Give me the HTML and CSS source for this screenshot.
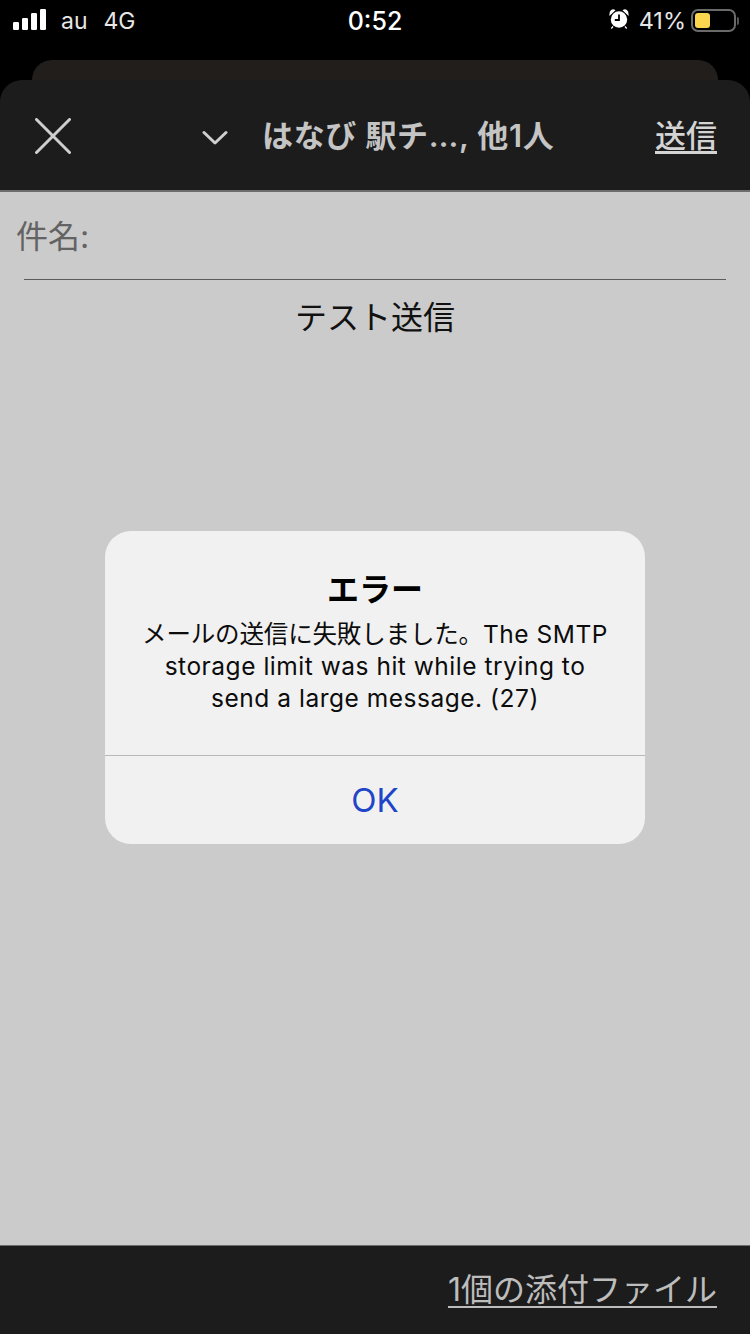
FILE: index.html
```html
<!DOCTYPE html>
<html lang="ja">
<head>
<meta charset="utf-8">
<title>エラー</title>
<link rel="stylesheet" href="styles.css">
</head>
<body>
<div class="screen">
  <div class="status">
    <div class="status-left">
      <svg class="signal" width="34" height="22" viewBox="0 0 34 22"><rect x="0" y="13" width="6" height="8" rx="1.2"/><rect x="9" y="9" width="6" height="12" rx="1.2"/><rect x="18" y="4" width="6" height="17" rx="1.2"/><rect x="27" y="0" width="6" height="21" rx="1.2"/></svg>
      <span class="carrier">au</span>
      <span class="net">4G</span>
    </div>
    <div class="time">0:52</div>
    <div class="status-right">
      <svg class="alarm" width="20" height="22" viewBox="0 0 20 22"><circle cx="10" cy="11.500" r="8.200" fill="#fff"/><path d="M10 6.500V12H5.800" fill="none" stroke="#000" stroke-width="1.800"/><path d="M1 6.500 5.500 2.300C3.500 1 1 2.800 1 6.500ZM19 6.500 14.500 2.300C16.500 1 19 2.800 19 6.500ZM4 18.500 2.300 20.500M16 18.500 17.700 20.500" fill="#fff" stroke="#fff" stroke-width="1.200"/></svg>
      <span class="pct">41%</span>
      <div class="battery"><div class="battery-fill"></div></div>
      <div class="battery-cap"></div>
    </div>
  </div>
  <div class="card-behind"></div>
  <header class="nav">
    <svg class="close" width="36" height="36" viewBox="0 0 36 36"><path d="M1.500 1.500 34.500 34.500M34.500 1.500 1.500 34.500" fill="none" stroke="#cfcfcf" stroke-width="3" stroke-linecap="round"/></svg>
    <div class="nav-title">
      <svg class="chev" width="26" height="16" viewBox="0 0 26 16"><path d="M2 2.500 13 13 24 2.500" fill="none" stroke="#cfcfcf" stroke-width="3" stroke-linecap="round" stroke-linejoin="round"/></svg>
      <span class="recipients">はなび 駅チ…, 他1人</span>
    </div>
    <span class="send">送信</span>
  </header>
  <main class="content">
    <div class="subject-label">件名:</div>
    <div class="rule"></div>
    <div class="subject">テスト送信</div>
  </main>
  <footer class="bottom">
    <span class="attach">1個の添付ファイル</span>
  </footer>
  <div class="dialog">
    <div class="dialog-body">
      <div class="dialog-title">エラー</div>
      <p class="dialog-text"><span class="jp">メールの送信に失敗しました。</span>The SMTP<br>storage limit was hit while trying to<br>send a large message. (27)</p>
    </div>
    <div class="dialog-btn">OK</div>
  </div>
</div>
</body>
</html>
```
FILE: styles.css
```css
* { box-sizing: border-box; }
html, body { margin: 0; padding: 0; }
body {
  width: 750px;
  height: 1334px;
  overflow: hidden;
  background: #000;
  font-family: "Inter", "Noto Sans CJK JP", sans-serif;
}
.screen {
  position: relative;
  width: 750px;
  height: 1334px;
  display: flex;
  flex-direction: column;
}
.status {
  height: 60px;
  flex: none;
  position: relative;
  display: flex;
  justify-content: space-between;
  color: #fff;
  padding: 0 11px 0 13px;
}
.status-left { display: flex; align-items: flex-start; padding-top: 9px; }
.signal { fill: #fff; margin-right: 14px; }
.carrier, .net { font-size: 23px; line-height: 24px; color: #e6e6e6; }
.net { margin-left: 16px; }
.time {
  position: absolute;
  left: 0;
  right: 0;
  top: 8px;
  text-align: center;
  font-size: 25px;
  line-height: 26px;
  font-weight: 500;
}
.status-right { display: flex; align-items: flex-start; padding-top: 8px; }
.alarm { margin-right: 10px; }
.pct { font-size: 23.500px; line-height: 25px; color: #e6e6e6; margin-right: 5px; }
.battery {
  width: 45px;
  height: 23px;
  border: 2px solid #6a6a6a;
  border-radius: 7px;
  padding: 2px;
  margin-top: 1px;
}
.battery-fill { width: 15px; height: 15px; background: #fcd64f; border-radius: 3px; }
.battery-cap { width: 2px; height: 8px; background: #555; margin: 9px 0 0 1px; border-radius: 0 2px 2px 0; }
.card-behind {
  flex: none;
  height: 20px;
  margin: 0 32px;
  background: #211e1c;
  border-radius: 20px 20px 0 0;
}
.nav {
  flex: none;
  height: 112px;
  background: #1c1c1c;
  border-radius: 22px 22px 0 0;
  border-bottom: 2px solid #6c6c6c;
  position: relative;
  display: flex;
  align-items: center;
  padding: 0 33px 0 35px;
  justify-content: space-between;
}
.close { margin-top: 2px; }
.nav-title {
  position: absolute;
  left: 202px;
  top: 33px;
  display: flex;
  align-items: center;
  color: #c4c4c4;
}
.chev { margin-right: 34px; margin-top: 3px; }
.recipients { font-size: 31px; line-height: 46px; font-weight: 600; white-space: nowrap; letter-spacing: 0.650px; }
.send { font-size: 31px; line-height: 46px; color: #d4d4d4; font-weight: 500; text-decoration: underline; text-underline-offset: 4px; margin-top: 2px; }
.content {
  flex: 1;
  background: #cbcbcb;
  padding: 22px 24px 0;
  display: flex;
  flex-direction: column;
}
.subject-label { font-size: 32px; line-height: 46px; color: #636363; margin-left: -8px; height: 65px; }
.rule { height: 1px; background: #5c5c5c; }
.subject { font-size: 32px; line-height: 48px; color: #111; text-align: center; margin-top: 14px; }
.bottom {
  flex: none;
  height: 89px;
  background: #1c1c1c;
  border-top: 1px solid #6c6c6c;
  display: flex;
  align-items: center;
  justify-content: flex-end;
  padding: 0 33px 0 0;
}
.attach { font-size: 32px; line-height: 46px; color: #bdbdbd; text-decoration: underline; text-decoration-thickness: 2px; text-underline-offset: 5px; }
.dialog {
  position: absolute;
  left: 105px;
  top: 531px;
  width: 540px;
  height: 313px;
  background: #f1f1f1;
  border-radius: 26px;
  display: flex;
  flex-direction: column;
  color: #000;
}
.dialog-body { height: 224px; padding: 38px 20px 0; text-align: center; }
.dialog-title { font-size: 32px; line-height: 42px; font-weight: 700; }
.dialog-text { margin: 7px 0 0; font-size: 24.500px; line-height: 32px; color: #0c0c0c; letter-spacing: 0.520px; }
.jp { letter-spacing: -0.150px; }
.dialog-btn {
  flex: 1;
  border-top: 1px solid #b8b8b8;
  display: flex;
  align-items: center;
  justify-content: center;
  font-size: 33px;
  color: #1f45c8;
}
```
